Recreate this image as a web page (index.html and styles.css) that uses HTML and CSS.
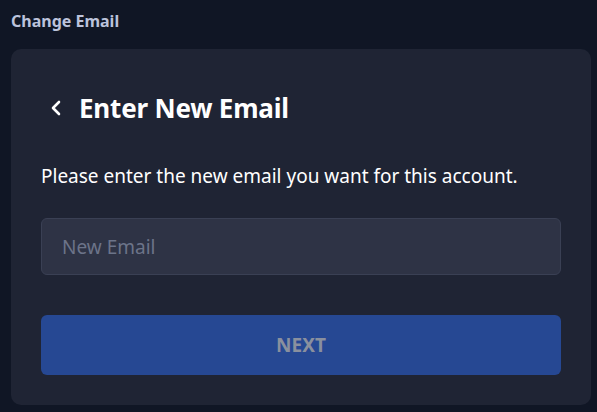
FILE: index.html
```html
<!DOCTYPE html>
<html lang="en">
<head>
  <meta charset="UTF-8">
  <meta name="viewport" content="width=device-width, initial-scale=1.0">
  <title>Change Email</title>
  <link rel="stylesheet" href="styles.css">
</head>
<body>

  <div class="page-title">Change Email</div>

  <div class="card">
    <div class="heading">
      <span class="back">
        <svg width="12" height="16" viewBox="0 0 12 16" fill="none">
          <path d="M9 2L3 8l6 6" stroke="#ffffff" stroke-width="2.6" stroke-linecap="round" stroke-linejoin="round"/>
        </svg>
      </span>
      <h1>Enter New Email</h1>
    </div>

    <p class="hint">Please enter the new email you want for this account.</p>

    <input type="text" class="field" placeholder="New Email">

    <button class="next">NEXT</button>
  </div>

</body>
</html>
```

FILE: styles.css
```css
body {
  margin: 0;
  padding: 11px 6px 7px 11px;
  background-color: #101625;
  font-family: "Noto Sans", "Open Sans", sans-serif;
  box-sizing: border-box;
  height: 412px;
  display: flex;
  flex-direction: column;
}
.page-title {
  font-size: 16px;
  font-weight: bold;
  color: #bcc3dc;
  line-height: 20px;
  height: 38px;
}
.card {
  flex: 1;
  background-color: #1f2434;
  border-radius: 10px;
  padding: 42px 30px 30px 30px;
}
.heading {
  display: flex;
  align-items: center;
  height: 34px;
}
.back {
  display: flex;
  width: 38px;
  padding-left: 9px;
  box-sizing: border-box;
}
h1 {
  margin: 0;
  font-size: 26px;
  font-weight: bold;
  color: #ffffff;
  letter-spacing: -0.2px;
}
.hint {
  margin: 39px 0 0 0;
  font-size: 19px;
  line-height: 24px;
  color: #ffffff;
}
.field {
  display: block;
  width: 100%;
  height: 57px;
  margin-top: 30px;
  padding: 0 20px;
  background-color: #2e3345;
  border: 1px solid #3a4054;
  border-radius: 6px;
  box-sizing: border-box;
  font-family: inherit;
  font-size: 19px;
  color: #ffffff;
  outline: none;
}
.field::placeholder {
  color: #6c7489;
}
.next {
  display: block;
  width: 100%;
  height: 60px;
  margin-top: 40px;
  background-color: #264893;
  border: none;
  border-radius: 6px;
  font-family: inherit;
  font-size: 19px;
  font-weight: bold;
  color: #8a909e;
  cursor: pointer;
}
```
